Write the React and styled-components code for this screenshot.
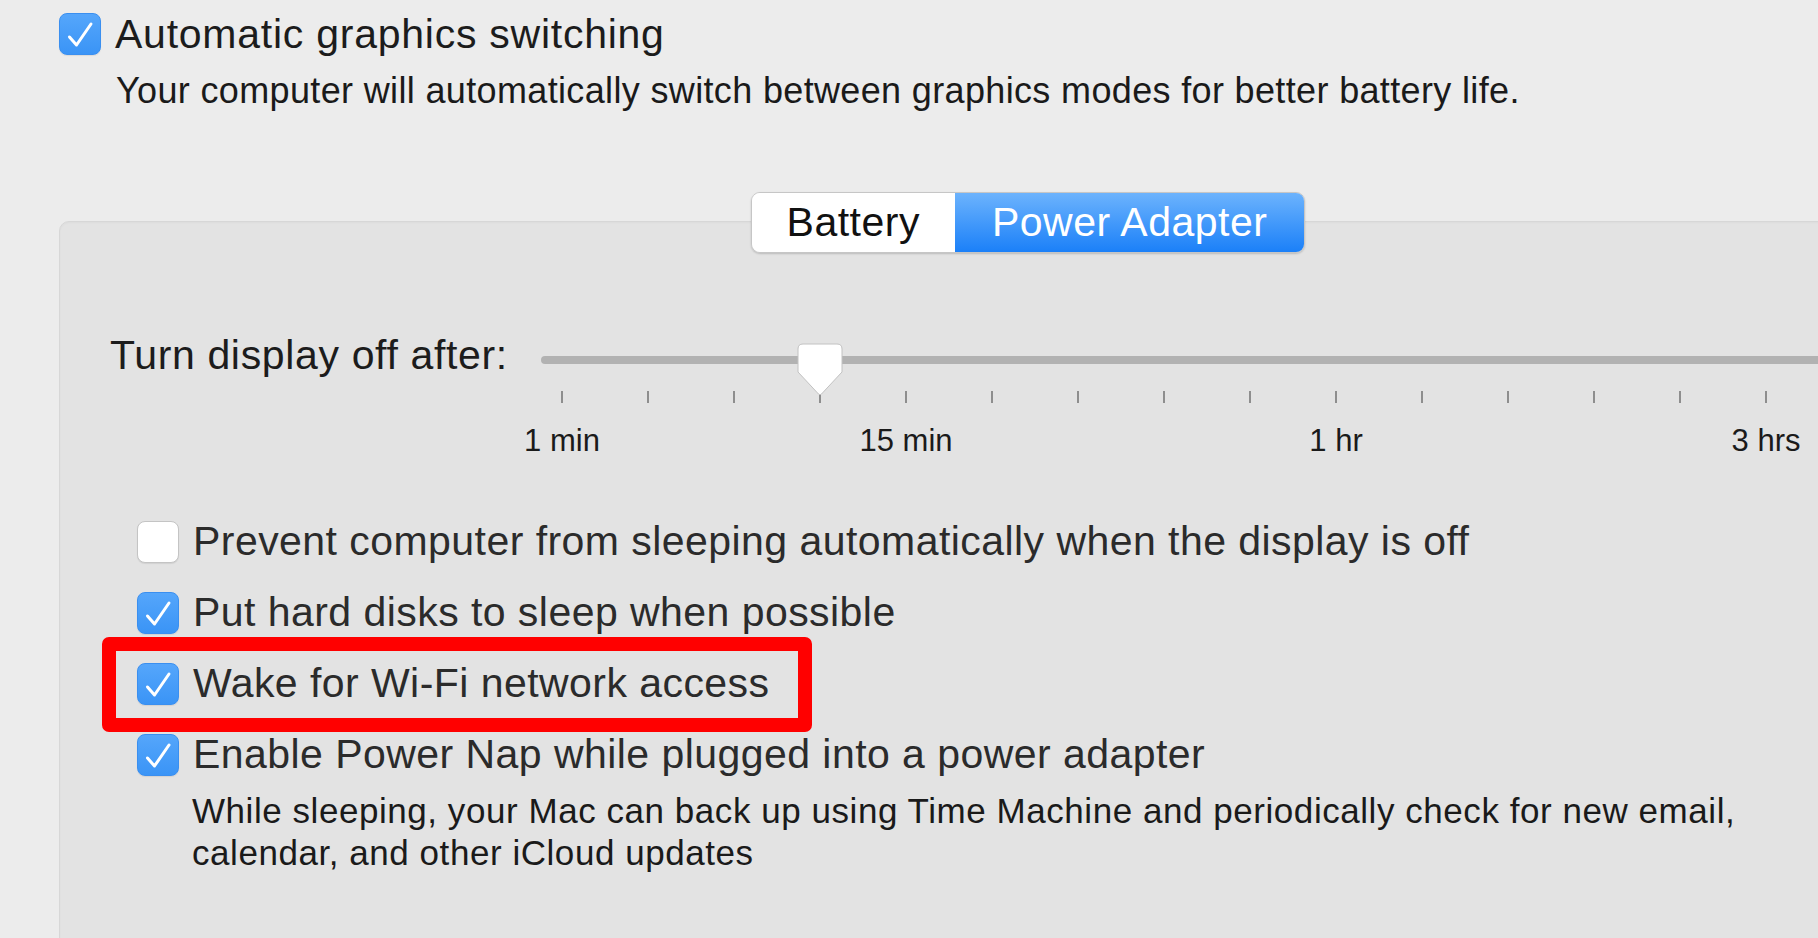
import React from 'react';
import styled, { createGlobalStyle } from 'styled-components';

const GlobalStyle = createGlobalStyle`
  html, body {
    margin: 0;
    padding: 0;
    background: #ececec;
    overflow: hidden;
  }

  body {
    font-family: 'Liberation Sans', Arial, sans-serif;
    color: #1e1e1e;
    -webkit-font-smoothing: antialiased;
  }
`;

const TICK_PITCH = 86;
const TICK_COUNT = 15;

const StyledPage = styled.div`
  width: 1818px;
  height: 938px;
  padding: 13px 0 0 59px;
  box-sizing: border-box;
`;

const StyledOption = styled.label`
  position: relative;
  display: flex;
  align-items: center;
  gap: 14px;
  height: ${({ $height }) => $height || 71}px;
  font-size: 41px;
  letter-spacing: ${({ $spacing }) => $spacing || 0.45}px;
  color: ${({ $muted }) => ($muted ? '#2b2b2b' : '#1c1c1c')};
  white-space: nowrap;
`;

const StyledBox = styled.span`
  flex: none;
  display: flex;
  width: 42px;
  height: 42px;
  border-radius: 8px;
  box-sizing: border-box;
  background: ${({ $checked }) =>
    $checked ? 'linear-gradient(#55a6fb, #3a94f6)' : '#ffffff'};
  border: 1px solid ${({ $checked }) => ($checked ? '#3a8ff0' : '#c4c4c4')};
  box-shadow: 0 1px 1px rgba(0, 0, 0, 0.08);

  svg {
    width: 40px;
    height: 40px;
  }
`;

const StyledNote = styled.p`
  margin: ${({ $top }) => $top || 0}px 0 0 ${({ $indent }) => $indent || 0}px;
  font-size: ${({ $size }) => $size || 36}px;
  line-height: ${({ $lh }) => $lh || 40}px;
  letter-spacing: ${({ $spacing }) => $spacing || 0.35}px;
  color: #1a1a1a;
  white-space: nowrap;
`;

const StyledPanel = styled.section`
  margin-top: 110px;
  width: 1938px;
  min-height: 760px;
  box-sizing: border-box;
  background: #e3e3e3;
  border: 1px solid #d7d7d7;
  border-radius: 10px;
  box-shadow: inset 0 1px 2px rgba(0, 0, 0, 0.03);
`;

const StyledSegmentRow = styled.div`
  display: flex;
  justify-content: center;
  margin-top: -30px;
`;

const StyledSegmented = styled.div`
  display: flex;
  height: 61px;
  border-radius: 9px;
  overflow: hidden;
  border: 1px solid #c6c6c6;
  box-shadow: 0 1px 2px rgba(0, 0, 0, 0.18);
  box-sizing: border-box;
`;

const StyledSegment = styled.div`
  display: flex;
  align-items: center;
  padding: 0 ${({ $pad }) => $pad}px;
  font-size: 41px;
  letter-spacing: 0.5px;
  color: ${({ $active }) => ($active ? '#ffffff' : '#111111')};
  background: ${({ $active }) =>
    $active ? 'linear-gradient(#6cb3fd, #1b80f8)' : '#ffffff'};
`;

const StyledSliderRow = styled.div`
  display: flex;
  align-items: flex-start;
  margin: 78px 0 0 50px;
`;

const StyledSliderLabel = styled.div`
  flex: none;
  width: 409px;
  font-size: 41px;
  line-height: 48px;
  letter-spacing: 0.65px;
  color: #1c1c1c;
  white-space: nowrap;
`;

const StyledSlider = styled.div`
  position: relative;
  flex: 1;
`;

const StyledTrack = styled.div`
  margin: 25px 0 0 22px;
  height: 8px;
  border-radius: 4px;
  background: #b2b2b2;
`;

const StyledThumb = styled.svg`
  position: absolute;
  top: 10px;
  width: 52px;
  height: 56px;
  overflow: visible;
`;

const StyledTickGrid = styled.div`
  display: grid;
  grid-template-columns: repeat(${TICK_COUNT}, ${TICK_PITCH}px);
  justify-items: center;
  margin-top: ${({ $top }) => $top}px;
`;

const StyledTick = styled.span`
  width: 2px;
  height: 12px;
  background: #8e8e8e;
`;

const StyledTickLabel = styled.span`
  grid-column: ${({ $col }) => $col};
  font-size: 31px;
  line-height: 36px;
  color: #1a1a1a;
  white-space: nowrap;
`;

const StyledOptions = styled.div`
  margin: 47px 0 0 77px;
`;

const StyledHighlight = styled.span`
  position: absolute;
  left: -35px;
  top: -11px;
  width: 710px;
  height: 95px;
  box-sizing: border-box;
  border: 14px solid #ff0000;
  border-radius: 7px;
  pointer-events: none;
`;

const Check = () => (
  <svg viewBox="0 0 40 40" fill="none">
    <path
      d="M9.5 23 L16.5 31 L31 10"
      stroke="#ffffff"
      strokeWidth="3"
      strokeLinecap="round"
      strokeLinejoin="round"
    />
  </svg>
);

const Checkbox = ({ checked }) => <StyledBox $checked={checked}>{checked && <Check />}</StyledBox>;

const tickLabels = [
  { col: 1, text: '1 min' },
  { col: 5, text: '15 min' },
  { col: 10, text: '1 hr' },
  { col: 15, text: '3 hrs' },
];

const App = () => {
  const thumbIndex = 3;
  const thumbLeft = thumbIndex * TICK_PITCH + TICK_PITCH / 2 - 26;

  return (
    <>
      <GlobalStyle />
      <StyledPage>
        <StyledOption $height={42} $spacing={0.75}>
          <Checkbox checked />
          Automatic graphics switching
        </StyledOption>
        <StyledNote $top={16} $indent={57}>
          Your computer will automatically switch between graphics modes for better battery life.
        </StyledNote>

        <StyledPanel>
          <StyledSegmentRow>
            <StyledSegmented>
              <StyledSegment $pad={35}>Battery</StyledSegment>
              <StyledSegment $pad={37} $active>
                Power Adapter
              </StyledSegment>
            </StyledSegmented>
          </StyledSegmentRow>

          <StyledSliderRow>
            <StyledSliderLabel>Turn display off after:</StyledSliderLabel>
            <StyledSlider>
              <StyledTrack />
              <StyledThumb style={{ left: thumbLeft }} viewBox="0 0 52 56">
                <path
                  d="M4 8 Q4 3 9 3 L43 3 Q48 3 48 8 L48 31 L27.5 53 Q26 54.5 24.5 53 L4 31 Z"
                  fill="#ffffff"
                  stroke="#c2c2c2"
                  strokeWidth="1"
                />
              </StyledThumb>
              <StyledTickGrid $top={27}>
                {Array.from({ length: TICK_COUNT }, (_, i) => (
                  <StyledTick key={i} />
                ))}
              </StyledTickGrid>
              <StyledTickGrid $top={20}>
                {tickLabels.map((label) => (
                  <StyledTickLabel key={label.text} $col={label.col}>
                    {label.text}
                  </StyledTickLabel>
                ))}
              </StyledTickGrid>
            </StyledSlider>
          </StyledSliderRow>

          <StyledOptions>
            <StyledOption $muted>
              <Checkbox />
              Prevent computer from sleeping automatically when the display is off
            </StyledOption>
            <StyledOption $muted>
              <Checkbox checked />
              Put hard disks to sleep when possible
            </StyledOption>
            <StyledOption $muted>
              <Checkbox checked />
              Wake for Wi-Fi network access
              <StyledHighlight />
            </StyledOption>
            <StyledOption $muted>
              <Checkbox checked />
              Enable Power Nap while plugged into a power adapter
            </StyledOption>
            <StyledNote $indent={55} $size={35} $lh={42} $spacing={0.55}>
              While sleeping, your Mac can back up using Time Machine and periodically check for new email,
              <br />
              calendar, and other iCloud updates
            </StyledNote>
          </StyledOptions>
        </StyledPanel>
      </StyledPage>
    </>
  );
};

export default App;
